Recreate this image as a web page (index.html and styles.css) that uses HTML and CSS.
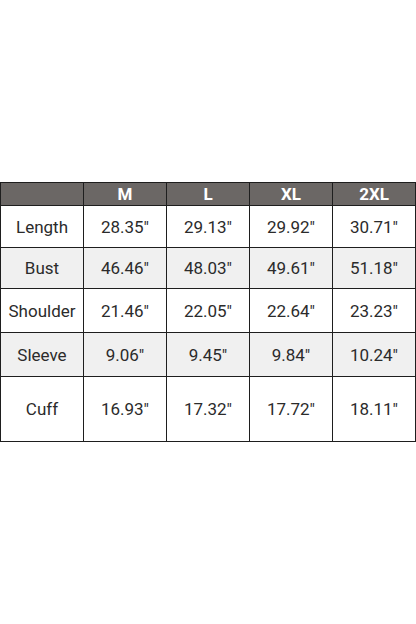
FILE: index.html
```html
<!DOCTYPE html>
<html>
<head>
<meta charset="utf-8">
<link rel="stylesheet" href="styles.css">
</head>
<body>
<div class="page">
  <table class="size-table">
    <colgroup>
      <col class="c"><col class="c"><col class="c"><col class="c"><col class="c">
    </colgroup>
    <thead>
      <tr class="head"><th></th><th>M</th><th>L</th><th>XL</th><th>2XL</th></tr>
    </thead>
    <tbody>
      <tr class="r1"><td>Length</td><td>28.35"</td><td>29.13"</td><td>29.92"</td><td>30.71"</td></tr>
      <tr class="r2 alt"><td>Bust</td><td>46.46"</td><td>48.03"</td><td>49.61"</td><td>51.18"</td></tr>
      <tr class="r3"><td>Shoulder</td><td>21.46"</td><td>22.05"</td><td>22.64"</td><td>23.23"</td></tr>
      <tr class="r4 alt"><td>Sleeve</td><td>9.06"</td><td>9.45"</td><td>9.84"</td><td>10.24"</td></tr>
      <tr class="r5"><td>Cuff</td><td>16.93"</td><td>17.32"</td><td>17.72"</td><td>18.11"</td></tr>
    </tbody>
  </table>
</div>
</body>
</html>
```

FILE: styles.css
```css
html, body {
  margin: 0;
  padding: 0;
  background: #ffffff;
}
.page {
  width: 416px;
  height: 624px;
  padding-top: 182px;
  box-sizing: border-box;
}
.size-table {
  width: 416px;
  border-collapse: collapse;
  table-layout: fixed;
  font-family: "Roboto", "DejaVu Sans", sans-serif;
  font-size: 17px;
  color: #2b2b2b;
}
.size-table .c { width: 83px; }
.size-table th, .size-table td {
  border: 1.5px solid #1e1e1e;
  text-align: center;
  vertical-align: middle;
  padding: 0;
  white-space: nowrap;
}
.head th {
  background: #6b6765;
  color: #ffffff;
  font-weight: 700;
  height: 22px;
  line-height: 20px;
}
.r1 td { height: 41px; }
.r2 td { height: 40px; }
.r3 td { height: 43px; }
.r4 td { height: 43px; }
.r5 td { height: 64px; }
.alt td { background: #f0f0f0; }
```
